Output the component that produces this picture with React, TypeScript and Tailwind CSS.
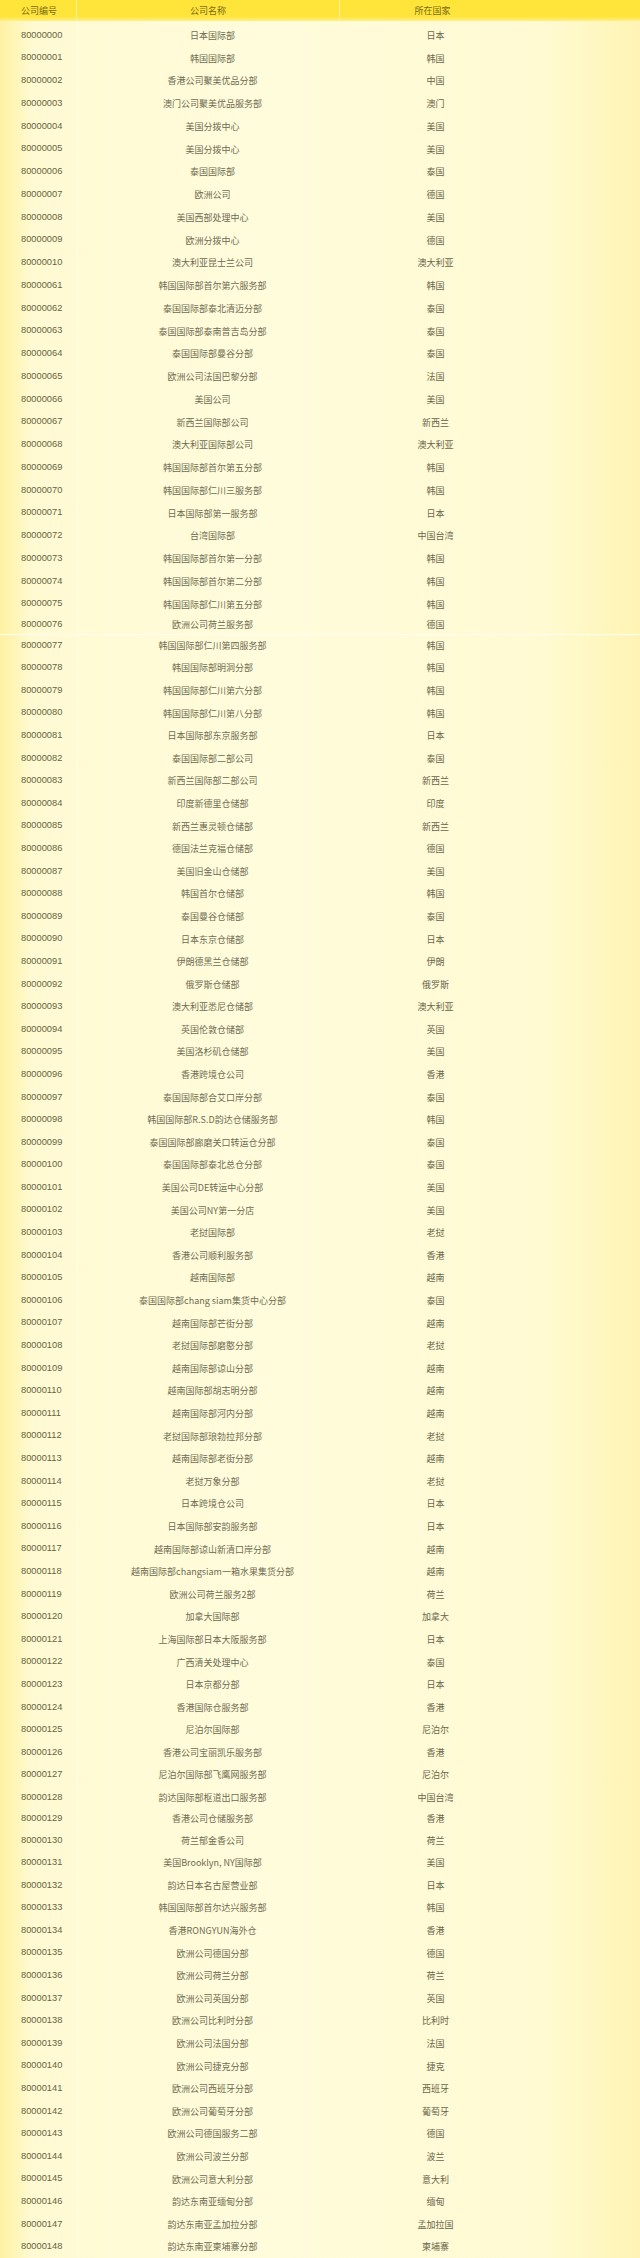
import React from "react"

type Row = [string, string, string]

const rows: Row[] = [
  ["80000000", "日本国际部", "日本"],
  ["80000001", "韩国国际部", "韩国"],
  ["80000002", "香港公司聚美优品分部", "中国"],
  ["80000003", "澳门公司聚美优品服务部", "澳门"],
  ["80000004", "美国分拨中心", "美国"],
  ["80000005", "美国分拨中心", "美国"],
  ["80000006", "泰国国际部", "泰国"],
  ["80000007", "欧洲公司", "德国"],
  ["80000008", "美国西部处理中心", "美国"],
  ["80000009", "欧洲分拨中心", "德国"],
  ["80000010", "澳大利亚昆士兰公司", "澳大利亚"],
  ["80000061", "韩国国际部首尔第六服务部", "韩国"],
  ["80000062", "泰国国际部泰北清迈分部", "泰国"],
  ["80000063", "泰国国际部泰南普吉岛分部", "泰国"],
  ["80000064", "泰国国际部曼谷分部", "泰国"],
  ["80000065", "欧洲公司法国巴黎分部", "法国"],
  ["80000066", "美国公司", "美国"],
  ["80000067", "新西兰国际部公司", "新西兰"],
  ["80000068", "澳大利亚国际部公司", "澳大利亚"],
  ["80000069", "韩国国际部首尔第五分部", "韩国"],
  ["80000070", "韩国国际部仁川三服务部", "韩国"],
  ["80000071", "日本国际部第一服务部", "日本"],
  ["80000072", "台湾国际部", "中国台湾"],
  ["80000073", "韩国国际部首尔第一分部", "韩国"],
  ["80000074", "韩国国际部首尔第二分部", "韩国"],
  ["80000075", "韩国国际部仁川第五分部", "韩国"],
  ["80000076", "欧洲公司荷兰服务部", "德国"],
  ["80000077", "韩国国际部仁川第四服务部", "韩国"],
  ["80000078", "韩国国际部明洞分部", "韩国"],
  ["80000079", "韩国国际部仁川第六分部", "韩国"],
  ["80000080", "韩国国际部仁川第八分部", "韩国"],
  ["80000081", "日本国际部东京服务部", "日本"],
  ["80000082", "泰国国际部二部公司", "泰国"],
  ["80000083", "新西兰国际部二部公司", "新西兰"],
  ["80000084", "印度新德里仓储部", "印度"],
  ["80000085", "新西兰惠灵顿仓储部", "新西兰"],
  ["80000086", "德国法兰克福仓储部", "德国"],
  ["80000087", "美国旧金山仓储部", "美国"],
  ["80000088", "韩国首尔仓储部", "韩国"],
  ["80000089", "泰国曼谷仓储部", "泰国"],
  ["80000090", "日本东京仓储部", "日本"],
  ["80000091", "伊朗德黑兰仓储部", "伊朗"],
  ["80000092", "俄罗斯仓储部", "俄罗斯"],
  ["80000093", "澳大利亚悉尼仓储部", "澳大利亚"],
  ["80000094", "英国伦敦仓储部", "英国"],
  ["80000095", "美国洛杉矶仓储部", "美国"],
  ["80000096", "香港跨境仓公司", "香港"],
  ["80000097", "泰国国际部合艾口岸分部", "泰国"],
  ["80000098", "韩国国际部R.S.D韵达仓储服务部", "韩国"],
  ["80000099", "泰国国际部廊磨关口转运仓分部", "泰国"],
  ["80000100", "泰国国际部泰北总仓分部", "泰国"],
  ["80000101", "美国公司DE转运中心分部", "美国"],
  ["80000102", "美国公司NY第一分店", "美国"],
  ["80000103", "老挝国际部", "老挝"],
  ["80000104", "香港公司顺利服务部", "香港"],
  ["80000105", "越南国际部", "越南"],
  ["80000106", "泰国国际部chang siam集货中心分部", "泰国"],
  ["80000107", "越南国际部芒街分部", "越南"],
  ["80000108", "老挝国际部磨憨分部", "老挝"],
  ["80000109", "越南国际部谅山分部", "越南"],
  ["80000110", "越南国际部胡志明分部", "越南"],
  ["80000111", "越南国际部河内分部", "越南"],
  ["80000112", "老挝国际部琅勃拉邦分部", "老挝"],
  ["80000113", "越南国际部老街分部", "越南"],
  ["80000114", "老挝万象分部", "老挝"],
  ["80000115", "日本跨境仓公司", "日本"],
  ["80000116", "日本国际部安韵服务部", "日本"],
  ["80000117", "越南国际部谅山新清口岸分部", "越南"],
  ["80000118", "越南国际部changsiam一箱水果集货分部", "越南"],
  ["80000119", "欧洲公司荷兰服务2部", "荷兰"],
  ["80000120", "加拿大国际部", "加拿大"],
  ["80000121", "上海国际部日本大阪服务部", "日本"],
  ["80000122", "广西清关处理中心", "泰国"],
  ["80000123", "日本京都分部", "日本"],
  ["80000124", "香港国际仓服务部", "香港"],
  ["80000125", "尼泊尔国际部", "尼泊尔"],
  ["80000126", "香港公司宝丽凯乐服务部", "香港"],
  ["80000127", "尼泊尔国际部飞鹰网服务部", "尼泊尔"],
  ["80000128", "韵达国际部枢道出口服务部", "中国台湾"],
  ["80000129", "香港公司仓储服务部", "香港"],
  ["80000130", "荷兰郁金香公司", "荷兰"],
  ["80000131", "美国Brooklyn, NY国际部", "美国"],
  ["80000132", "韵达日本名古屋营业部", "日本"],
  ["80000133", "韩国国际部首尔达兴服务部", "韩国"],
  ["80000134", "香港RONGYUN海外仓", "香港"],
  ["80000135", "欧洲公司德国分部", "德国"],
  ["80000136", "欧洲公司荷兰分部", "荷兰"],
  ["80000137", "欧洲公司英国分部", "英国"],
  ["80000138", "欧洲公司比利时分部", "比利时"],
  ["80000139", "欧洲公司法国分部", "法国"],
  ["80000140", "欧洲公司捷克分部", "捷克"],
  ["80000141", "欧洲公司西班牙分部", "西班牙"],
  ["80000142", "欧洲公司葡萄牙分部", "葡萄牙"],
  ["80000143", "欧洲公司德国服务二部", "德国"],
  ["80000144", "欧洲公司波兰分部", "波兰"],
  ["80000145", "欧洲公司意大利分部", "意大利"],
  ["80000146", "韵达东南亚缅甸分部", "缅甸"],
  ["80000147", "韵达东南亚孟加拉分部", "孟加拉国"],
  ["80000148", "韵达东南亚柬埔寨分部", "柬埔寨"],
]

// the scan has two slightly squeezed rows
function rowHeight(i: number): string {
  if (i === 26) return "h-[18.5px]"
  if (i === 79) return "h-[20px]"
  if (i < 26) return "h-[22.75px]"
  return "h-[22.6px]"
}

export default function App() {
  return (
    <div className="w-[640px] h-[2258px] overflow-hidden bg-[linear-gradient(90deg,#fff1a2_0%,#fffad2_5%,#fffcdc_40%,#fffad2_85%,#fff4b4_100%)] font-['Noto_Sans_CJK_SC',sans-serif] text-[9px] leading-none">
      <div className="grid grid-cols-[77px_263px_185px_1fr] h-[21px] bg-[linear-gradient(180deg,#ffe538_0%,#ffe43c_80%,#fff08a_100%)] text-[#7a6a18]">
        <div className="flex items-center pl-[21px] border-r border-[#fff09a]">公司编号</div>
        <div className="flex items-center justify-center border-r border-[#fff09a]">公司名称</div>
        <div className="flex items-center justify-center">所在国家</div>
        <div />
      </div>
      <div className="h-[3px]" />
      {rows.map(([id, name, country], i) => (
        <div
          key={id}
          className={`grid grid-cols-[77px_270px_177px_1fr] ${rowHeight(i)} ${i === 27 ? "border-t border-[#fffef2]" : ""}`}
        >
          <div className="flex items-center pl-[21px] text-[9.3px] text-[#66643f] font-['Liberation_Sans','Noto_Sans_CJK_SC',sans-serif]">
            {id}
          </div>
          <div className="flex items-center justify-center whitespace-nowrap text-[#6f6b52] border-l border-[#fffde8]">
            {name}
          </div>
          <div className="flex items-center justify-center whitespace-nowrap text-[#6a664c]">
            {country}
          </div>
          <div />
        </div>
      ))}
    </div>
  )
}
